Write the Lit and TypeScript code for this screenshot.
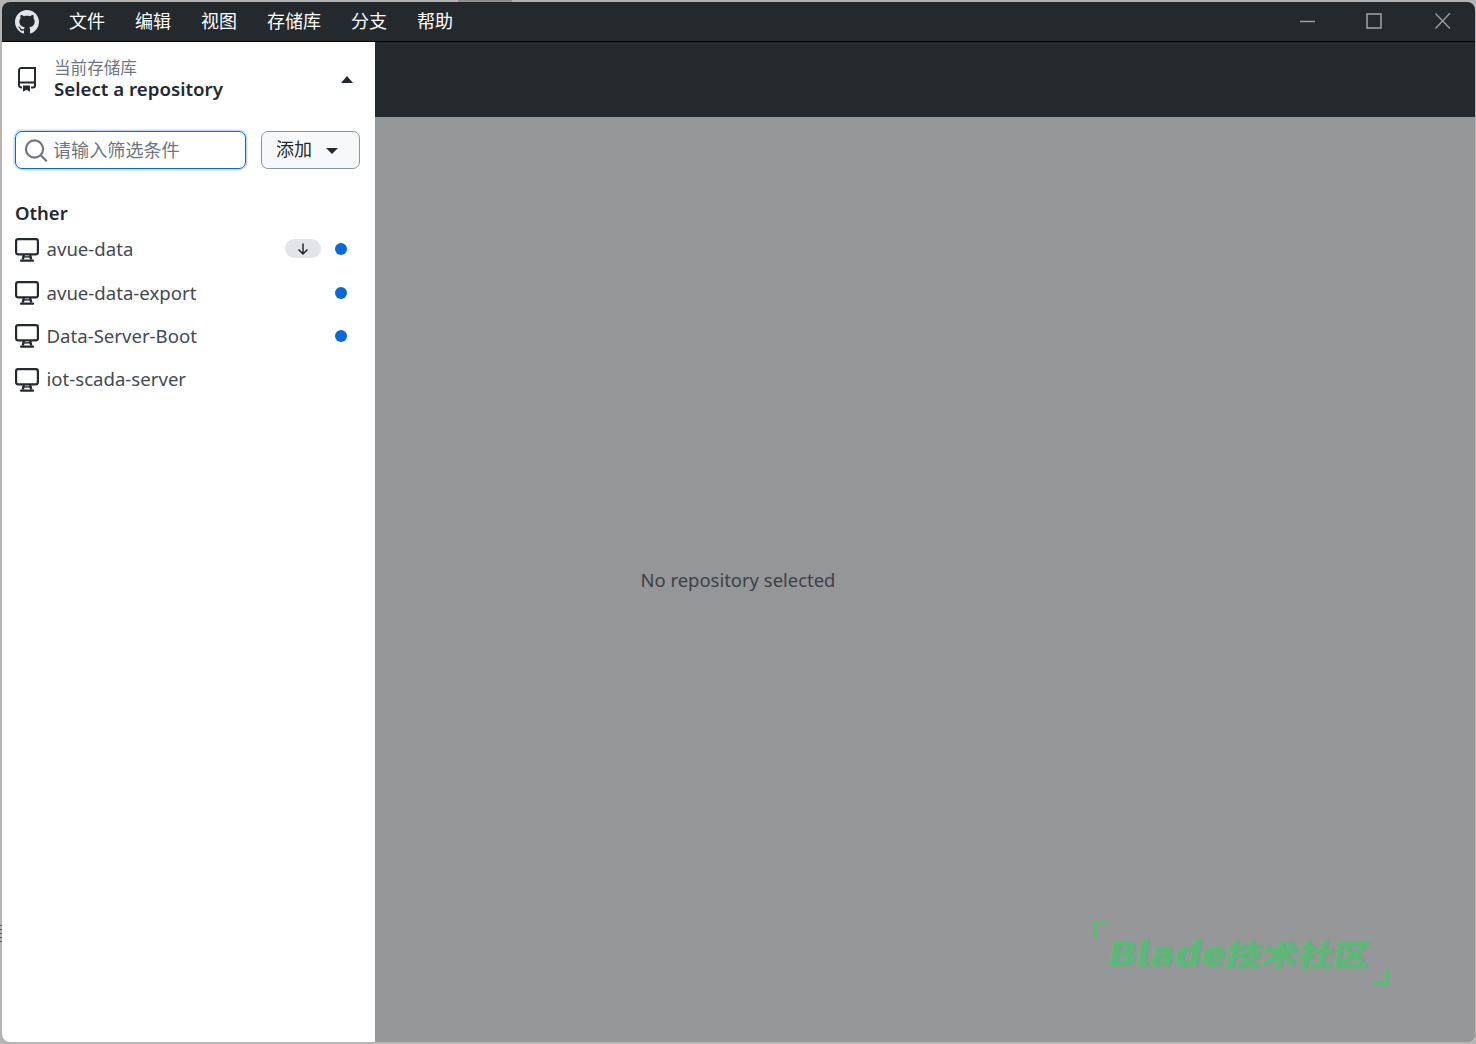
import { LitElement, html, css, svg } from "lit";
import { customElement } from "lit/decorators.js";

const desktop = svg`<svg class="ico" width="24" height="24" viewBox="0 0 24 24" fill="none"><rect x="1.1" y="1.1" width="21.8" height="15.2" rx="2" stroke="#24292f" stroke-width="2.2"/><path d="M8.8 17l-1 4.4M15.2 17l1 4.4" stroke="#24292f" stroke-width="2.4"/><path d="M6 22.7h12" stroke="#24292f" stroke-width="2.2" stroke-linecap="round"/><path d="M8.5 18.9h7" stroke="#24292f" stroke-width="1.4"/></svg>`;

@customElement("app-root")
export class AppRoot extends LitElement {
  static styles = css`
    :host { display: block; position: relative; width: 1476px; height: 1044px; background: #b4b4b4; box-sizing: border-box; padding: 2px 1px 2px 2px; font-family: "Noto Sans", "Noto Sans CJK SC", sans-serif; overflow: hidden; }
    .strip { position: absolute; left: 458px; top: 0; width: 54px; height: 2px; background: #8e8e8e; }
    .ticks { position: absolute; left: 0; top: 925px; width: 2px; height: 18px; background: repeating-linear-gradient(to bottom, #555 0 1px, transparent 1px 4px); }
    .win { height: 100%; display: flex; flex-direction: column; border-radius: 8px; overflow: hidden; background: #959697; }
    .title { height: 39px; flex: none; display: flex; align-items: center; background: #24292e; border-bottom: 1px solid #000; box-sizing: content-box; color: #fff; }
    .logo { margin: 0 0 0 13px; width: 24px; height: 24px; flex: none; }
    .menu { display: flex; margin-left: 15px; padding-bottom: 2px; }
    .menu span { padding: 0 15px; font-size: 18px; line-height: 37px; font-family: "Noto Sans CJK SC", sans-serif; }
    .winbtns { margin-left: auto; margin-right: -2px; display: flex; padding-bottom: 2px; }
    .winbtns div { width: 67.5px; height: 37px; display: flex; align-items: center; justify-content: center; }
    .max { overflow: visible; }
    .body { flex: 1; display: flex; min-height: 0; }
    .side { width: 373px; flex: none; background: #fff; display: flex; flex-direction: column; }
    .cur { height: 75px; box-sizing: border-box; display: flex; align-items: center; padding: 0 22px 0 15px; }
    .cur .text { margin: 0 0 0.5px 17px; flex: 1; }
    .cur .lab { font-size: 16.6px; line-height: 20px; color: #6e7781; font-family: "Noto Sans CJK SC", sans-serif; margin-top: -1px; }
    .cur .val { font-size: 18.7px; line-height: 22px; font-weight: 600; color: #24292f; margin-top: 1px; }
    .filter { display: flex; gap: 15px; padding: 14px 15px 0 13px; }
    .search { width: 231px; height: 38px; box-sizing: border-box; border: 1.5px solid #0969da; border-radius: 7px; box-shadow: 0 0 0 1.5px #c3dcf8; display: flex; align-items: center; padding-left: 8px; color: #6e7781; font-size: 18.1px; font-family: "Noto Sans CJK SC", sans-serif; }
    .search span { margin: 0 0 3px 5px; }
    .add { width: 99px; height: 38px; box-sizing: border-box; border: 1px solid #8c959f; border-radius: 7px; background: #f6f8fa; display: flex; align-items: center; padding-left: 14px; color: #24292f; font-size: 18px; font-family: "Noto Sans CJK SC", sans-serif; }
    .add span { margin-bottom: 5px; }
    .add svg { margin: 2px 0 0 14px; }
    .other { margin: 32px 0 0 13px; font-size: 18.5px; line-height: 24px; font-weight: 600; color: #24292f; }
    .list { margin-top: 2px; }
    .row { height: 43.4px; padding: 0 28px 0 13px; display: flex; align-items: center; color: #424a53; font-size: 18.6px; }
    .row .ico { margin-top: 2px; }
    .row .name { margin-left: 7.5px; flex: 1; }
    .badge { width: 36px; height: 19px; border-radius: 10px; background: #e1e4e8; display: flex; align-items: center; justify-content: center; margin-right: 14px; }
    .dot { width: 12px; height: 12px; border-radius: 50%; background: #0969da; margin-top: 1px; }
    .main { flex: 1; display: flex; flex-direction: column; position: relative; }
    .bar { height: 75px; flex: none; background: #24292e; }
    .msg { flex: 1; background: #959697; position: relative; color: #3e4246; font-size: 18.45px; }
    .msg .t { position: absolute; left: 265.5px; top: 450px; line-height: 26px; }
    .wm { position: absolute; left: 718px; top: 879px; width: 296px; height: 64px; color: #5bb877; }
    .wm .tl { position: absolute; left: 1px; top: 0; width: 16px; height: 16px; border-left: 3px solid currentColor; border-top: 3px solid currentColor; box-sizing: border-box; }
    .wm .br { position: absolute; right: 0; bottom: 0; width: 16px; height: 16px; border-right: 3px solid currentColor; border-bottom: 3px solid currentColor; box-sizing: border-box; }
    .wm .w { position: absolute; left: 12px; top: 12px; font-size: 29px; line-height: 38px; font-weight: 900; white-space: nowrap; font-family: "Noto Sans CJK SC", sans-serif; transform: skewX(-10deg) scaleX(1.24); transform-origin: left bottom; -webkit-text-stroke: 0.5px currentColor; }
    .wm .lat { font-size: 33px; }
  `;

  render() {
    const rows: [string, boolean, boolean][] = [
      ["avue-data", true, true],
      ["avue-data-export", false, true],
      ["Data-Server-Boot", false, true],
      ["iot-scada-server", false, false],
    ];
    return html`<div class="strip"></div><div class="ticks"></div><div class="win">
      <div class="title">
        <svg class="logo" viewBox="0 0 16 16" fill="#e1e4e8"><path d="M8 0C3.58 0 0 3.58 0 8c0 3.54 2.29 6.53 5.47 7.59.4.07.55-.17.55-.38 0-.19-.01-.82-.01-1.49-2.01.37-2.53-.49-2.69-.94-.09-.23-.48-.94-.82-1.13-.28-.15-.68-.52-.01-.53.63-.01 1.08.58 1.23.82.72 1.21 1.87.87 2.33.66.07-.52.28-.87.51-1.07-1.78-.2-3.64-.89-3.64-3.95 0-.87.31-1.59.82-2.15-.08-.2-.36-1.02.08-2.12 0 0 .67-.21 2.2.82.64-.18 1.32-.27 2-.27s1.36.09 2 .27c1.53-1.04 2.2-.82 2.2-.82.44 1.1.16 1.92.08 2.12.51.56.82 1.27.82 2.15 0 3.07-1.87 3.75-3.65 3.95.29.25.54.73.54 1.48 0 1.07-.01 1.93-.01 2.2 0 .21.15.46.55.38A8.01 8.01 0 0 0 16 8c0-4.42-3.58-8-8-8z"/></svg>
        <div class="menu">${["文件", "编辑", "视图", "存储库", "分支", "帮助"].map((m) => html`<span>${m}</span>`)}</div>
        <div class="winbtns">
          <div><svg width="16" height="16" viewBox="0 0 16 16"><path d="M0 8.5h15" stroke="#9a9ea1" stroke-width="1.4"/></svg></div>
          <div><svg class="max" width="16" height="16" viewBox="0 0 16 16" fill="none"><rect x="-1" y="1" width="14" height="14" stroke="#9a9ea1" stroke-width="1.6"/></svg></div>
          <div><svg width="16" height="16" viewBox="0 0 16 16" fill="none"><path d="M.5.5l14.5 15M15-.0l-14.5 15.5" stroke="#9a9ea1" stroke-width="1.3"/></svg></div>
        </div>
      </div>
      <div class="body">
        <div class="side">
          <div class="cur">
            <svg width="20" height="25" viewBox="0 0 20 25" fill="none"><path d="M2 18V3.4A2.4 2.4 0 0 1 4.4 1h13.6v17.4a2 2 0 0 1-2 2h-2" stroke="#24292f" stroke-width="2"/><path d="M2 18a2.4 2.4 0 0 0 2.4 2.4H5M2 15.4h16" stroke="#24292f" stroke-width="2" fill="none"/><path d="M6 18.6h7v6.2l-3.5-2-3.5 2z" fill="#24292f"/></svg>
            <div class="text"><div class="lab">当前存储库</div><div class="val">Select a repository</div></div>
            <svg width="12" height="7" viewBox="0 0 12 7" fill="#24292f"><path d="M6 0l6 7H0z"/></svg>
          </div>
          <div class="filter">
            <div class="search">
              <svg width="24" height="24" viewBox="0 0 24 24" fill="none"><circle cx="10.5" cy="11" r="8.6" stroke="#6e7781" stroke-width="2.2"/><path d="M17 17.5l5.2 5.2" stroke="#6e7781" stroke-width="2.2" stroke-linecap="round"/></svg>
              <span>请输入筛选条件</span>
            </div>
            <div class="add"><span>添加</span><svg width="12" height="7" viewBox="0 0 12 7" fill="#24292f"><path d="M0 0h12L6 6z"/></svg></div>
          </div>
          <div class="other">Other</div>
          <div class="list">
            ${rows.map(([n, b, d]) => html`<div class="row">${desktop}<span class="name">${n}</span>
              ${b ? html`<span class="badge"><svg width="16" height="16" viewBox="0 0 16 16" fill="none"><path d="M8 2.5v10.5M3.5 8.5L8 13l4.5-4.5" stroke="#24292f" stroke-width="1.5"/></svg></span>` : ""}
              ${d ? html`<span class="dot"></span>` : ""}</div>`)}
          </div>
        </div>
        <div class="main">
          <div class="bar"></div>
          <div class="msg"><span class="t">No repository selected</span></div>
          <div class="wm"><div class="tl"></div><div class="br"></div><div class="w"><span class="lat">Blade</span>技术社区</div></div>
        </div>
      </div>
    </div>`;
  }
}
